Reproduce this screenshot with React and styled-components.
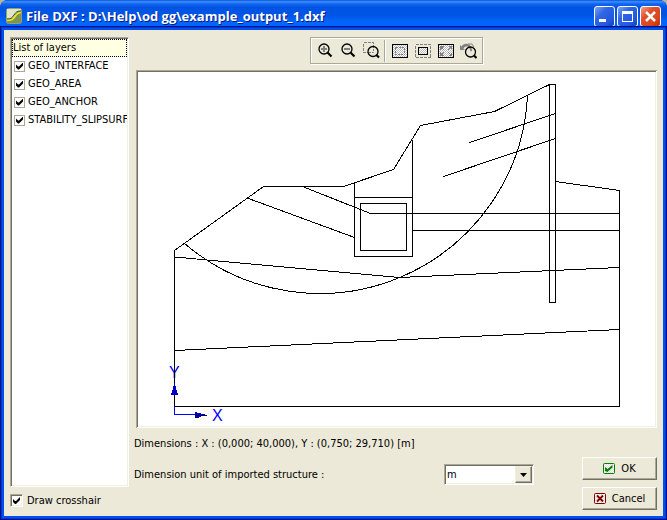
import React, { useState } from "react";
import styled, { createGlobalStyle } from "styled-components";

const GlobalStyle = createGlobalStyle`
  * {
    box-sizing: border-box;
  }
  body {
    margin: 0;
    background-color: #b5b29f;
    color: #000;
    font-family: "DejaVu Sans Condensed", "DejaVu Sans", sans-serif;
    font-size: 11px;
    line-height: 14px;
  }
  button,
  select {
    color: inherit;
    font: inherit;
  }
`;

const Window = styled.div`
  display: flex;
  flex-direction: column;
  min-height: 100vh;
  border-radius: 8px 8px 0 0;
  background-color: #0831d9;
  overflow: hidden;
`;

const TitleBar = styled.header`
  display: flex;
  align-items: center;
  gap: 4px;
  height: 30px;
  padding: 2px 6px 0;
  background: linear-gradient(
    #0a50d8 0,
    #3a92ff 6%,
    #1668f0 12%,
    #0054e3 24%,
    #0055e5 50%,
    #0065fb 72%,
    #0068ff 86%,
    #0050dd 94%,
    #003dc0 100%
  );
`;

const Title = styled.h1`
  flex: 1;
  margin: 0;
  overflow: hidden;
  color: #fff;
  font-family: "Open Sans", "Noto Sans", sans-serif;
  font-size: 13px;
  font-weight: 700;
  line-height: 18px;
  white-space: nowrap;
  text-shadow: 1px 1px 0 #0a1883;
`;

const WindowButtons = styled.div`
  display: flex;
  gap: 2px;
  padding-top: 1px;
`;

const WindowButton = styled.button`
  display: flex;
  width: 21px;
  height: 21px;
  padding: 0;
  border: 1px solid #fff;
  border-radius: 3px;
  background: ${({ $close }) =>
    $close
      ? "linear-gradient(135deg, #f0a088 0%, #e0502c 35%, #d8441c 75%, #b83008 100%)"
      : "linear-gradient(135deg, #7ca4f4 0%, #2f66e4 35%, #2458e0 75%, #1440b8 100%)"};
`;

const Content = styled.main`
  flex: 1;
  display: flex;
  gap: 5px;
  padding: 7px 6px 6px;
  margin: 0 4px 4px;
  background-color: #ece9d8;
  box-shadow: 0 0 0 2px #0050ee, 0 0 0 3px #0038d0, 0 0 0 4px #00108c;
`;

const Sidebar = styled.aside`
  display: flex;
  flex-direction: column;
  flex: 0 0 119px;
  min-width: 0;
`;

const LayerList = styled.section`
  flex: 1;
  overflow: hidden;
  border: 1px solid;
  border-color: #aca899 #fff #fff #aca899;
  background-color: #fff;
  box-shadow: inset 1px 1px 0 #716f64, inset -1px -1px 0 #f1efe2;
  padding: 1px;
`;

const ListHeading = styled.h2`
  height: 18px;
  margin: 0;
  border: 1px dotted #000;
  background-color: #ffffe1;
  font-size: 11px;
  font-weight: 400;
  line-height: 16px;
  white-space: nowrap;
`;

const LayerLabel = styled.label`
  display: flex;
  align-items: center;
  gap: 3px;
  height: 18px;
  padding-left: 2px;
  overflow: hidden;
  line-height: 16px;
  white-space: nowrap;
`;

const CrosshairLabel = styled.label`
  display: flex;
  align-items: center;
  gap: 4px;
  height: 23px;
  padding-top: 4px;
`;

const CheckBox = styled.input`
  appearance: none;
  display: grid;
  place-items: center;
  flex: none;
  width: ${({ $flat }) => ($flat ? 11 : 13)}px;
  height: ${({ $flat }) => ($flat ? 11 : 13)}px;
  margin: 0;
  border: 1px solid;
  border-color: ${({ $flat }) =>
    $flat ? "#aca899" : "#aca899 #fff #fff #aca899"};
  background-color: #fff;
  box-shadow: ${({ $flat }) =>
    $flat ? "none" : "inset 1px 1px 0 #716f64, inset -1px -1px 0 #f1efe2"};

  &:checked::after {
    content: "";
    width: 7px;
    height: 7px;
    background-color: #000;
    clip-path: polygon(
      0 2px,
      2px 4px,
      3px 4px,
      7px 0,
      7px 3px,
      3px 7px,
      2px 7px,
      0 5px
    );
  }
`;

const MainArea = styled.div`
  flex: 1;
  display: flex;
  flex-direction: column;
  min-width: 0;
`;

const Preview = styled.section`
  flex: 1;
  display: flex;
  flex-direction: column;
  gap: 6px;
  padding-left: 2px;
  min-height: 0;
`;

const ToolBar = styled.div`
  display: flex;
  align-items: center;
  align-self: center;
  height: 27px;
  padding: 0 2px 0 3px;
  border: 1px solid #aca899;
  box-shadow: 1px 1px 0 #fff, inset 1px 1px 0 #fff;
`;

const ToolButton = styled.button`
  display: grid;
  place-items: center;
  width: 23px;
  height: 23px;
  padding: 0;
  border: none;
  background: none;
`;

const Separator = styled.span`
  width: 2px;
  height: 22px;
  margin: 0 2px 0 1px;
  border-left: 1px solid #aca899;
  border-right: 1px solid #fff;
`;

const Canvas = styled.div`
  flex: 1;
  display: flex;
  min-height: 0;
  padding: 2px;
  background-color: #fff;
  box-shadow: inset 1px 1px 0 #aca899, inset -1px -1px 0 #fff,
    inset 2px 2px 0 #716f64, inset -2px -2px 0 #f1efe2;
`;

const Drawing = styled.svg`
  flex: 1;
  min-width: 0;
  min-height: 0;
  fill: none;
  stroke: #000;
  shape-rendering: crispEdges;

  text {
    fill: #00f;
    stroke: none;
    font-family: "Liberation Sans", sans-serif;
    font-size: 16px;
  }
`;

const Footer = styled.footer`
  display: flex;
  justify-content: space-between;
  gap: 48px;
`;

const Details = styled.div`
  flex: 1;
  display: flex;
  flex-direction: column;
  gap: 13px;
  padding-top: 9px;
`;

const Dimensions = styled.p`
  margin: 0;
`;

const UnitRow = styled.div`
  display: flex;
  align-items: center;
  justify-content: space-between;
`;

const SelectBox = styled.div`
  position: relative;
  display: flex;
  width: 90px;
  height: 21px;
`;

const Select = styled.select`
  appearance: none;
  width: 100%;
  padding: 0 20px 0 2px;
  border: 1px solid;
  border-color: #aca899 #fff #fff #aca899;
  border-radius: 0;
  background-color: #fff;
  box-shadow: inset 1px 1px 0 #716f64, inset -1px -1px 0 #f1efe2;
`;

const SelectArrow = styled.span`
  position: absolute;
  top: 2px;
  right: 2px;
  bottom: 2px;
  display: grid;
  place-items: center;
  width: 17px;
  border: 1px solid;
  border-color: #f1efe2 #716f64 #716f64 #f1efe2;
  background-color: #ece9d8;
  box-shadow: inset -1px -1px 0 #aca899;
  pointer-events: none;
`;

const Actions = styled.div`
  display: flex;
  flex-direction: column;
  gap: 7px;
  padding-top: 29px;
`;

const ActionButton = styled.button`
  display: flex;
  align-items: center;
  justify-content: center;
  gap: 6px;
  width: 75px;
  height: 23px;
  padding: 0;
  border: 1px solid;
  border-color: #fff #716f64 #716f64 #fff;
  background-color: #ece9d8;
  box-shadow: inset -1px -1px 0 #aca899;
`;

// 2x2 dither used as the fill of the toolbar and button glyphs
const Dither = ({ id, color }) => (
  <pattern id={id} width="2" height="2" patternUnits="userSpaceOnUse">
    <rect width="2" height="2" fill="#fff" />
    <path d="M0 0h1v1H0zM1 1h1v1H1z" fill={color} />
  </pattern>
);

const AppIcon = () => (
  <svg width="16" height="16" viewBox="0 0 16 16" aria-hidden="true">
    <rect x="0.5" y="0.5" width="15" height="15" rx="2" fill="#7d9455" stroke="#8fa56c" />
    <path d="M1 1h14v2c-4 0-4 1-6 4s-4 4-8 4z" fill="#dfe5cd" />
    <path d="M1 11c4 0 5-1 7-4s3-4 7-4" fill="none" stroke="#33452a" />
    <path d="M1 12.5c5 0 6-1 8-4s3-4 6-4" fill="none" stroke="#f2e61c" strokeWidth="1.5" />
  </svg>
);

const Lens = ({ x = 0, y = 0, short }) => (
  <g transform={`translate(${x} ${y})`} fill="none" stroke="#000">
    <circle cx="6" cy="6" r="5" strokeWidth="1.3" />
    <path d={short ? "M9.5 9.5l2.5 2.5" : "M9.5 9.5l4 4"} strokeWidth="2.2" />
  </g>
);

const ZoomIn = () => (
  <svg width="15" height="15" viewBox="0 0 15 15">
    <path d="M3 6h6M6 3v6" stroke="#808080" strokeWidth="2" />
    <Lens />
  </svg>
);

const ZoomOut = () => (
  <svg width="15" height="15" viewBox="0 0 15 15">
    <path d="M3 6h6" stroke="#808080" strokeWidth="2" />
    <Lens />
  </svg>
);

const ZoomWindow = () => (
  <svg width="17" height="17" viewBox="0 0 17 17">
    <rect x="0.5" y="0.5" width="10" height="10" fill="none" stroke="#808080" strokeDasharray="3 1" shapeRendering="crispEdges" />
    <circle cx="10" cy="9.5" r="5" fill="#ece9d8" />
    <path d="M6 10.5h4.5V5" fill="none" stroke="#808080" strokeDasharray="2 1" />
    <Lens x={4} y={3.5} short />
  </svg>
);

const ZoomAll = () => (
  <svg width="16" height="14" viewBox="0 0 16 14" shapeRendering="crispEdges">
    <defs>
      <Dither id="all" color="#bbb" />
    </defs>
    <rect x="0.5" y="0.5" width="15" height="13" fill="url(#all)" stroke="#000" />
    <rect x="3.5" y="3.5" width="9" height="7" fill="none" stroke="#808080" strokeDasharray="2 1" />
  </svg>
);

const ZoomSelection = () => (
  <svg width="16" height="14" viewBox="0 0 16 14" shapeRendering="crispEdges">
    <defs>
      <Dither id="selection" color="#bbb" />
    </defs>
    <rect x="0.5" y="0.5" width="15" height="13" fill="none" stroke="#808080" strokeDasharray="3 1" />
    <rect x="3.5" y="3.5" width="9" height="7" fill="url(#selection)" stroke="#000" />
  </svg>
);

const ZoomExtents = () => (
  <svg width="16" height="14" viewBox="0 0 16 14" shapeRendering="crispEdges">
    <defs>
      <Dither id="extents" color="#bbb" />
    </defs>
    <rect x="0.5" y="0.5" width="15" height="13" fill="url(#extents)" stroke="#000" />
    <path d="M2 2h4L2 6zM14 2v4l-4-4zM2 12V8l4 4zM14 12h-4l4-4z" fill="#808080" />
    <path d="M3 3l3 3M13 3l-3 3M3 11l3-3M13 11l-3-3" stroke="#808080" />
  </svg>
);

const ZoomPrevious = () => (
  <svg width="17" height="16" viewBox="0 0 17 16">
    <circle cx="10.5" cy="9" r="5" fill="#ece9d8" />
    <path d="M0 2v5h5L3.4 5.4C5 3 8 3 9.5 5.5l1 3 1.5-.5C12 3 9 .8 6 .8 4 .8 2.6 1.8 1.6 3.4z" fill="#808080" />
    <path d="M8 1h4l2 3" fill="none" stroke="#808080" />
    <Lens x={4.5} y={3} short />
  </svg>
);

const OkIcon = () => (
  <svg width="12" height="11" viewBox="0 0 12 11" aria-hidden="true">
    <defs>
      <Dither id="ok" color="#ddd" />
    </defs>
    <rect x="0.5" y="0.5" width="11" height="10" rx="1" fill="url(#ok)" stroke="#008000" />
    <path d="M2 4l2.5 2L9.5 2v2.5L4.5 9 2 8z" fill="#008000" />
  </svg>
);

const CancelIcon = () => (
  <svg width="12" height="11" viewBox="0 0 12 11" aria-hidden="true">
    <defs>
      <Dither id="cancel" color="#ddd" />
    </defs>
    <rect x="0.5" y="0.5" width="11" height="10" rx="1" fill="url(#cancel)" stroke="#800000" />
    <path d="M3 2.5l6 6M9 2.5l-6 6" stroke="#800000" strokeWidth="1.8" />
  </svg>
);

const Structure = () => (
  <Drawing viewBox="138 72 517 354" role="img" aria-label="Imported structure">
    {/* axes */}
    <text x="169" y="378">Y</text>
    <text x="212" y="421">X</text>
    <path d="M174.5 381V414.5H197" stroke="#00f" />
    {/* terrain outline */}
    <path d="M174.5 406.5V250.5L263.5 186.5H343.5L393.5 169.5L420.5 125.5L494.5 111.5L549.5 84.5H555.5" />
    <path d="M555.5 181.5L619.5 190.5V406.5H174.5" />
    {/* axis arrows */}
    <path d="M174.5 383l3.5 12h-7z" fill="#0000c8" stroke="none" />
    <path d="M207 415l-12-3v6z" fill="#0000c8" stroke="none" />
    <path d="M195 415.5h12M195 417.5h4" stroke="#000060" />
    {/* wall */}
    <path d="M549.5 84.5H555.5V302.5H549.5Z" />
    {/* layers */}
    <path d="M174.5 257L399.5 277.5L619.5 267.5" />
    <path d="M174.5 350.5L619.5 329.5" />
    {/* chamber */}
    <path d="M354.5 182.5V256.5H412.5V139.5M354.5 197.5H412.5" />
    <rect x="360.5" y="203.5" width="46" height="47" />
    {/* interfaces and anchors */}
    <path d="M302.5 186.5L370.5 213.5H619.5" />
    <path d="M248.5 198.5L354.5 237.5M412.5 230.5H619.5" />
    <path d="M469.5 142.5L555.5 113.5M443.5 176.5L555.5 138.5" />
    {/* slip surface */}
    <path d="M184.5 243.5A208 208 0 0 0 527.5 95.5" />
  </Drawing>
);

const TOOLS = [
  { name: "Zoom in", Icon: ZoomIn },
  { name: "Zoom out", Icon: ZoomOut },
  { name: "Zoom window", Icon: ZoomWindow },
  null,
  { name: "Zoom all", Icon: ZoomAll },
  { name: "Zoom selection", Icon: ZoomSelection },
  { name: "Zoom extents", Icon: ZoomExtents },
  { name: "Previous zoom", Icon: ZoomPrevious },
];

const LAYERS = ["GEO_INTERFACE", "GEO_AREA", "GEO_ANCHOR", "STABILITY_SLIPSURF"];

const App = () => {
  const [hidden, setHidden] = useState([]);

  // Switch a single layer on or off
  const toggleLayer = (name) =>
    setHidden((prev) =>
      prev.includes(name) ? prev.filter((n) => n !== name) : [...prev, name]
    );

  return (
    <>
      <GlobalStyle />
      <Window>
        <TitleBar>
          <AppIcon />
          <Title>File DXF : D:\Help\od gg\example_output_1.dxf</Title>
          <WindowButtons>
            <WindowButton aria-label="Minimize">
              <svg width="19" height="19" viewBox="0 0 19 19">
                <path d="M4 12h7v3H4z" fill="#fff" />
              </svg>
            </WindowButton>
            <WindowButton aria-label="Maximize">
              <svg width="19" height="19" viewBox="0 0 19 19">
                <path d="M4 4h11v11H4zM5 7v7h9V7z" fill="#fff" fillRule="evenodd" />
              </svg>
            </WindowButton>
            <WindowButton $close aria-label="Close">
              <svg width="19" height="19" viewBox="0 0 19 19">
                <path d="M5 5l9 9M14 5l-9 9" stroke="#fff" strokeWidth="2.5" />
              </svg>
            </WindowButton>
          </WindowButtons>
        </TitleBar>
        <Content>
          <Sidebar>
            <LayerList>
              <ListHeading>List of layers</ListHeading>
              {LAYERS.map((name) => (
                <LayerLabel key={name}>
                  <CheckBox
                    type="checkbox"
                    $flat
                    checked={!hidden.includes(name)}
                    onChange={() => toggleLayer(name)}
                  />
                  {name}
                </LayerLabel>
              ))}
            </LayerList>
            <CrosshairLabel>
              <CheckBox type="checkbox" defaultChecked />
              Draw crosshair
            </CrosshairLabel>
          </Sidebar>
          <MainArea>
            <Preview>
              <ToolBar>
                {TOOLS.map((tool, index) =>
                  tool ? (
                    <ToolButton key={index} aria-label={tool.name}>
                      <tool.Icon />
                    </ToolButton>
                  ) : (
                    <Separator key={index} />
                  )
                )}
              </ToolBar>
              <Canvas>
                <Structure />
              </Canvas>
            </Preview>
            <Footer>
              <Details>
                <Dimensions>
                  Dimensions : X : (0,000; 40,000), Y : (0,750; 29,710) [m]
                </Dimensions>
                <UnitRow>
                  <label htmlFor="unit">Dimension unit of imported structure :</label>
                  <SelectBox>
                    <Select id="unit" defaultValue="m">
                      <option>m</option>
                      <option>cm</option>
                      <option>mm</option>
                    </Select>
                    <SelectArrow>
                      <svg width="7" height="4" viewBox="0 0 7 4">
                        <path d="M0 0h7L3.5 4z" />
                      </svg>
                    </SelectArrow>
                  </SelectBox>
                </UnitRow>
              </Details>
              <Actions>
                <ActionButton>
                  <OkIcon />
                  OK
                </ActionButton>
                <ActionButton>
                  <CancelIcon />
                  Cancel
                </ActionButton>
              </Actions>
            </Footer>
          </MainArea>
        </Content>
      </Window>
    </>
  );
};

export default App;
